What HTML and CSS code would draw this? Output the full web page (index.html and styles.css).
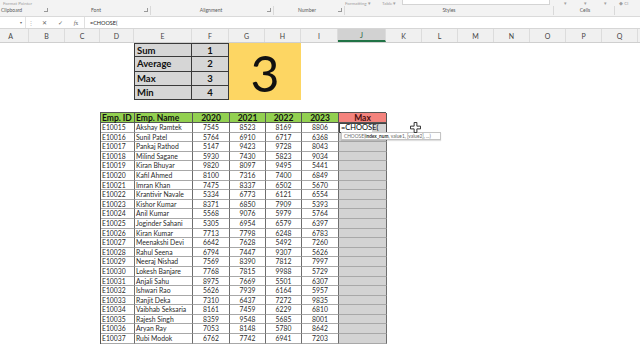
FILE: index.html
```html
<!DOCTYPE html>
<html>
<head>
<meta charset="utf-8">
<link rel="stylesheet" href="styles.css">
</head>
<body>
<div class="ribbon">
  <div class="rib-top">
    <span class="t-fp">Format Painter</span>
    <span class="t-sty1">Formatting ▾</span>
    <span class="t-sty2">Table ▾</span>
    <span class="t-box"></span>
    <span class="t-arr a1">▾</span>
    <span class="t-arr a2">▾</span>
    <span class="t-arr a3">▾</span>
    <span class="t-cl">◆ Cl</span>
  </div>
  <div class="rib-groups">
    <div class="grp g-clip"><span class="glabel left">Clipboard</span><span class="launch"></span></div>
    <div class="grp g-font sep"><span class="glabel">Font</span><span class="launch"></span></div>
    <div class="grp g-align sep"><span class="glabel">Alignment</span><span class="launch"></span></div>
    <div class="grp g-num sep"><span class="glabel">Number</span><span class="launch"></span></div>
    <div class="grp g-sty sep"><span class="glabel">Styles</span></div>
    <div class="grp g-cells sep"><span class="glabel">Cells</span></div>
    <div class="grp g-rest"></div>
  </div>
</div>
<div class="fbar">
  <div class="namebox"><span class="nb-arrow">▾</span></div>
  <span class="dots">⋮</span>
  <span class="fbtn">✕</span>
  <span class="fbtn">✓</span>
  <span class="fbtn fx"><i>f</i>x</span>
  <div class="formula">=CHOOSE(</div>
</div>
<div class="colhdr">
  <div class="ch cA">A</div>
  <div class="ch cB">B</div>
  <div class="ch cC">C</div>
  <div class="ch cD">D</div>
  <div class="ch cE">E</div>
  <div class="ch cF">F</div>
  <div class="ch cG">G</div>
  <div class="ch cH">H</div>
  <div class="ch cI">I</div>
  <div class="ch cJ sel">J</div>
  <div class="ch cK">K</div>
  <div class="ch cK">L</div>
  <div class="ch cK">M</div>
  <div class="ch cK">N</div>
  <div class="ch cK">O</div>
  <div class="ch cK">P</div>
  <div class="ch cK">Q</div>
</div>
<div class="sheet">
  <div class="summary">
    <div class="s-lab top">Sum</div><div class="s-num top">1</div>
    <div class="big">3</div>
    <div class="s-lab">Average</div><div class="s-num">2</div>
    <div class="s-lab">Max</div><div class="s-num">3</div>
    <div class="s-lab">Min</div><div class="s-num">4</div>
  </div>
  <div class="main">
    <div class="tbl">
      <div class="h l">Emp. ID</div><div class="h l">Emp. Name</div><div class="h">2020</div><div class="h">2021</div><div class="h">2022</div><div class="h">2023</div><div class="h mx">Max</div>
      <div class="c">E10015</div><div class="c">Akshay Ramtek</div><div class="c n">7545</div><div class="c n">8523</div><div class="c n">8169</div><div class="c n">8806</div><div class="c m act"><span class="edit">=CHOOSE(<span class="caret"></span></span></div>
      <div class="c">E10016</div><div class="c">Sunil Patel</div><div class="c n">5764</div><div class="c n">6910</div><div class="c n">6717</div><div class="c n">6368</div><div class="c m"></div>
      <div class="c">E10017</div><div class="c">Pankaj Rathod</div><div class="c n">5147</div><div class="c n">9423</div><div class="c n">9728</div><div class="c n">8043</div><div class="c m"></div>
      <div class="c">E10018</div><div class="c">Milind Sagane</div><div class="c n">5930</div><div class="c n">7430</div><div class="c n">5823</div><div class="c n">9034</div><div class="c m"></div>
      <div class="c">E10019</div><div class="c">Kiran Bhuyar</div><div class="c n">9820</div><div class="c n">8097</div><div class="c n">9495</div><div class="c n">5441</div><div class="c m"></div>
      <div class="c">E10020</div><div class="c">Kafil Ahmed</div><div class="c n">8100</div><div class="c n">7316</div><div class="c n">7400</div><div class="c n">6849</div><div class="c m"></div>
      <div class="c">E10021</div><div class="c">Imran Khan</div><div class="c n">7475</div><div class="c n">8337</div><div class="c n">6502</div><div class="c n">5670</div><div class="c m"></div>
      <div class="c">E10022</div><div class="c">Krantivir Navale</div><div class="c n">5334</div><div class="c n">6773</div><div class="c n">6121</div><div class="c n">6554</div><div class="c m"></div>
      <div class="c">E10023</div><div class="c">Kishor Kumar</div><div class="c n">8371</div><div class="c n">6850</div><div class="c n">7909</div><div class="c n">5393</div><div class="c m"></div>
      <div class="c">E10024</div><div class="c">Anil Kumar</div><div class="c n">5568</div><div class="c n">9076</div><div class="c n">5979</div><div class="c n">5764</div><div class="c m"></div>
      <div class="c">E10025</div><div class="c">Joginder Sahani</div><div class="c n">5305</div><div class="c n">6954</div><div class="c n">6579</div><div class="c n">6397</div><div class="c m"></div>
      <div class="c">E10026</div><div class="c">Kiran Kumar</div><div class="c n">7713</div><div class="c n">7798</div><div class="c n">6248</div><div class="c n">6783</div><div class="c m"></div>
      <div class="c">E10027</div><div class="c">Meenakshi Devi</div><div class="c n">6642</div><div class="c n">7628</div><div class="c n">5492</div><div class="c n">7260</div><div class="c m"></div>
      <div class="c">E10028</div><div class="c">Rahul Seena</div><div class="c n">6794</div><div class="c n">7447</div><div class="c n">9307</div><div class="c n">5626</div><div class="c m"></div>
      <div class="c">E10029</div><div class="c">Neeraj Nishad</div><div class="c n">7569</div><div class="c n">8390</div><div class="c n">7812</div><div class="c n">7997</div><div class="c m"></div>
      <div class="c">E10030</div><div class="c">Lokesh Banjare</div><div class="c n">7768</div><div class="c n">7815</div><div class="c n">9988</div><div class="c n">5729</div><div class="c m"></div>
      <div class="c">E10031</div><div class="c">Anjali Sahu</div><div class="c n">8975</div><div class="c n">7669</div><div class="c n">5501</div><div class="c n">6307</div><div class="c m"></div>
      <div class="c">E10032</div><div class="c">Ishwari Rao</div><div class="c n">5626</div><div class="c n">7939</div><div class="c n">6164</div><div class="c n">5957</div><div class="c m"></div>
      <div class="c">E10033</div><div class="c">Ranjit Deka</div><div class="c n">7310</div><div class="c n">6437</div><div class="c n">7272</div><div class="c n">9835</div><div class="c m"></div>
      <div class="c">E10034</div><div class="c">Vaibhab Seksaria</div><div class="c n">8161</div><div class="c n">7459</div><div class="c n">6229</div><div class="c n">6810</div><div class="c m"></div>
      <div class="c">E10035</div><div class="c">Rajesh Singh</div><div class="c n">8359</div><div class="c n">9548</div><div class="c n">5685</div><div class="c n">8001</div><div class="c m"></div>
      <div class="c">E10036</div><div class="c">Aryan Ray</div><div class="c n">7053</div><div class="c n">8148</div><div class="c n">5780</div><div class="c n">8642</div><div class="c m"></div>
      <div class="c">E10037</div><div class="c">Rubi Modok</div><div class="c n">6762</div><div class="c n">7742</div><div class="c n">6941</div><div class="c n">7203</div><div class="c m"></div>
    </div>
    <div class="tip">CHOOSE(<b>index_num</b>, value1, [value2], ...)</div>
    <svg class="cur" viewBox="0 0 12 12" width="11" height="11">
      <path d="M4.5 0.5h3v4h4v3h-4v4h-3v-4h-4v-3h4z" fill="#fff" stroke="#222" stroke-width="1"/>
    </svg>
  </div>
</div>
</body>
</html>
```

FILE: styles.css
```css
* { box-sizing: border-box; margin: 0; padding: 0; }
html, body { width: 640px; height: 360px; overflow: hidden; background: #fff; }
body { font-family: Lato, "Open Sans", "Liberation Sans", sans-serif; color: #000; }

/* ribbon */
.ribbon { height: 17px; background: #f3f3f3; border-bottom: 1px solid #dadada; }
.rib-top { height: 6px; display: flex; align-items: center; overflow: hidden; font-size: 4.5px; color: #a0a0a0; }
.rib-top span { line-height: 5px; height: 5px; white-space: nowrap; flex: none; }
.t-fp { width: 345px; padding-left: 3px; }
.t-sty1 { width: 37px; }
.t-sty2 { width: 20px; }
.t-box { width: 148px; background: #fff; border: 1px solid #d4d4d4; border-top: none; align-self: flex-start; }
.t-arr { width: 20px; text-align: center; }
.a1 { margin-left: 5px; }
.t-cl { margin-left: 4px; }
.rib-groups { height: 10px; display: flex; }
.grp { display: flex; align-items: flex-start; padding-top: 1px; height: 9px; flex: none; }
.sep { border-right: 1px solid #d9d9d9; }
.glabel { flex: 1; text-align: center; font-size: 5px; line-height: 6px; color: #5a5a5a; }
.glabel.left { text-align: left; padding-left: 1px; }
.launch { width: 4px; height: 4px; margin: 1px 2px 0 2px; border-right: 1px solid #999; border-bottom: 1px solid #999; flex: none; }
.g-clip { width: 50px; }
.g-font { width: 101px; }
.g-align { width: 123px; padding-left: 6px; }
.g-num { width: 71px; padding-left: 4px; }
.g-sty { width: 209px; }
.g-cells { width: 61px; padding-left: 2px; }
.g-rest { width: 25px; }

/* formula bar */
.fbar { height: 12px; display: flex; align-items: center; background: #fff; border-bottom: 1px solid #d6d6d6; font-size: 6px; color: #555; }
.namebox { width: 26px; height: 100%; display: flex; align-items: center; justify-content: flex-end; padding-right: 3px; border-right: 1px solid #e4e4e4; }
.nb-arrow { font-size: 4px; color: #666; }
.dots { width: 10px; text-align: center; font-size: 6px; color: #b5b5b5; }
.fbtn { width: 16px; text-align: center; font-size: 6px; color: #666; }
.fx { font-family: "Liberation Serif", serif; font-size: 6px; }
.formula { flex: 1; height: 100%; border-left: 1px solid #e0e0e0; padding-left: 5px; display: flex; align-items: center; font-size: 5.5px; color: #222; }

/* column headers */
.colhdr { display: flex; height: 14px; background: #f0f0f0; border-bottom: 1px solid #cfcfcf; }
.ch { flex: none; height: 100%; border-right: 1px solid #dcdcdc; font-size: 7px; color: #444; display: flex; align-items: center; justify-content: center; }
.cA { width: 29px; padding-right: 7px; }
.cB { width: 36px; }
.cC { width: 35px; }
.cD { width: 34px; }
.cE { width: 58px; }
.cF { width: 37px; }
.cG { width: 36px; }
.cH { width: 36px; }
.cI { width: 37px; }
.cJ { width: 48px; }
.cK { width: 36px; }
.ch.sel { background: #d2d2d2; border-bottom: 2px solid #217346; color: #1f5f3a; padding-top: 1px; }

/* sheet */
.summary { margin-left: 134px; display: grid; grid-template-columns: 58px 37px 72px; grid-template-rows: repeat(4, 14.25px); width: 167px; }
.s-lab, .s-num { background: #d6d6d6; border-bottom: 1px solid #3a3a3a; border-right: 1px solid #3a3a3a; font-weight: 700; font-size: 9.5px; display: flex; align-items: center; color: #111; }
.s-lab { border-left: 1px solid #3a3a3a; padding-left: 2px; }
.s-num { justify-content: center; }
.top { border-top: 1px solid #3a3a3a; }
.big { grid-column: 3; grid-row: 1 / span 4; background: #fdd663; display: flex; align-items: center; justify-content: center; font-size: 50px; line-height: 1; color: #111; padding-top: 2px; }

.main { position: relative; margin-left: 100px; margin-top: 12px; }
.tbl { display: grid; grid-template-columns: 34px 58px 37px 36px 36px 37px 48px; grid-template-rows: 10px repeat(23, 9.6px); width: 286px; border-top: 1px solid #555; border-left: 1px solid #555; }
.h { background: #92d050; font-weight: 700; font-size: 8.5px; display: flex; align-items: center; justify-content: center; border-right: 1px solid #555; border-bottom: 1px solid #555; color: #111; white-space: nowrap; }
.h.l { justify-content: flex-start; padding-left: 1px; }
.h.mx { background: #f4837d; color: #4a0d0d; }
.c { font-size: 6.8px; line-height: 9px; padding-left: 1px; white-space: nowrap; overflow: hidden; border-right: 1px solid #6e6e6e; border-bottom: 1px solid #a8a8a8; color: #2a2a2a; }
.n { text-align: center; padding-left: 0; }
.m { background: #d3d3d3; }
.act { padding: 0; display: flex; align-items: stretch; border: 1px solid #444; }
.edit { background: #fff; font-size: 7.5px; line-height: 8px; padding: 0 0 0 1px; color: #000; display: flex; align-items: center; width: 32px; }
.caret { width: 1px; height: 7px; background: #000; margin-left: 1px; }

.tip { position: absolute; left: 241px; top: 20px; width: 100px; height: 8px; background: #fff; border: 1px solid #c4c4c4; box-shadow: 0 1px 1px rgba(0,0,0,0.12); font-size: 4.8px; line-height: 6px; color: #666; padding-left: 2px; white-space: nowrap; overflow: hidden; }
.tip b { color: #333; }
.cur { position: absolute; left: 310px; top: 10px; }
```
